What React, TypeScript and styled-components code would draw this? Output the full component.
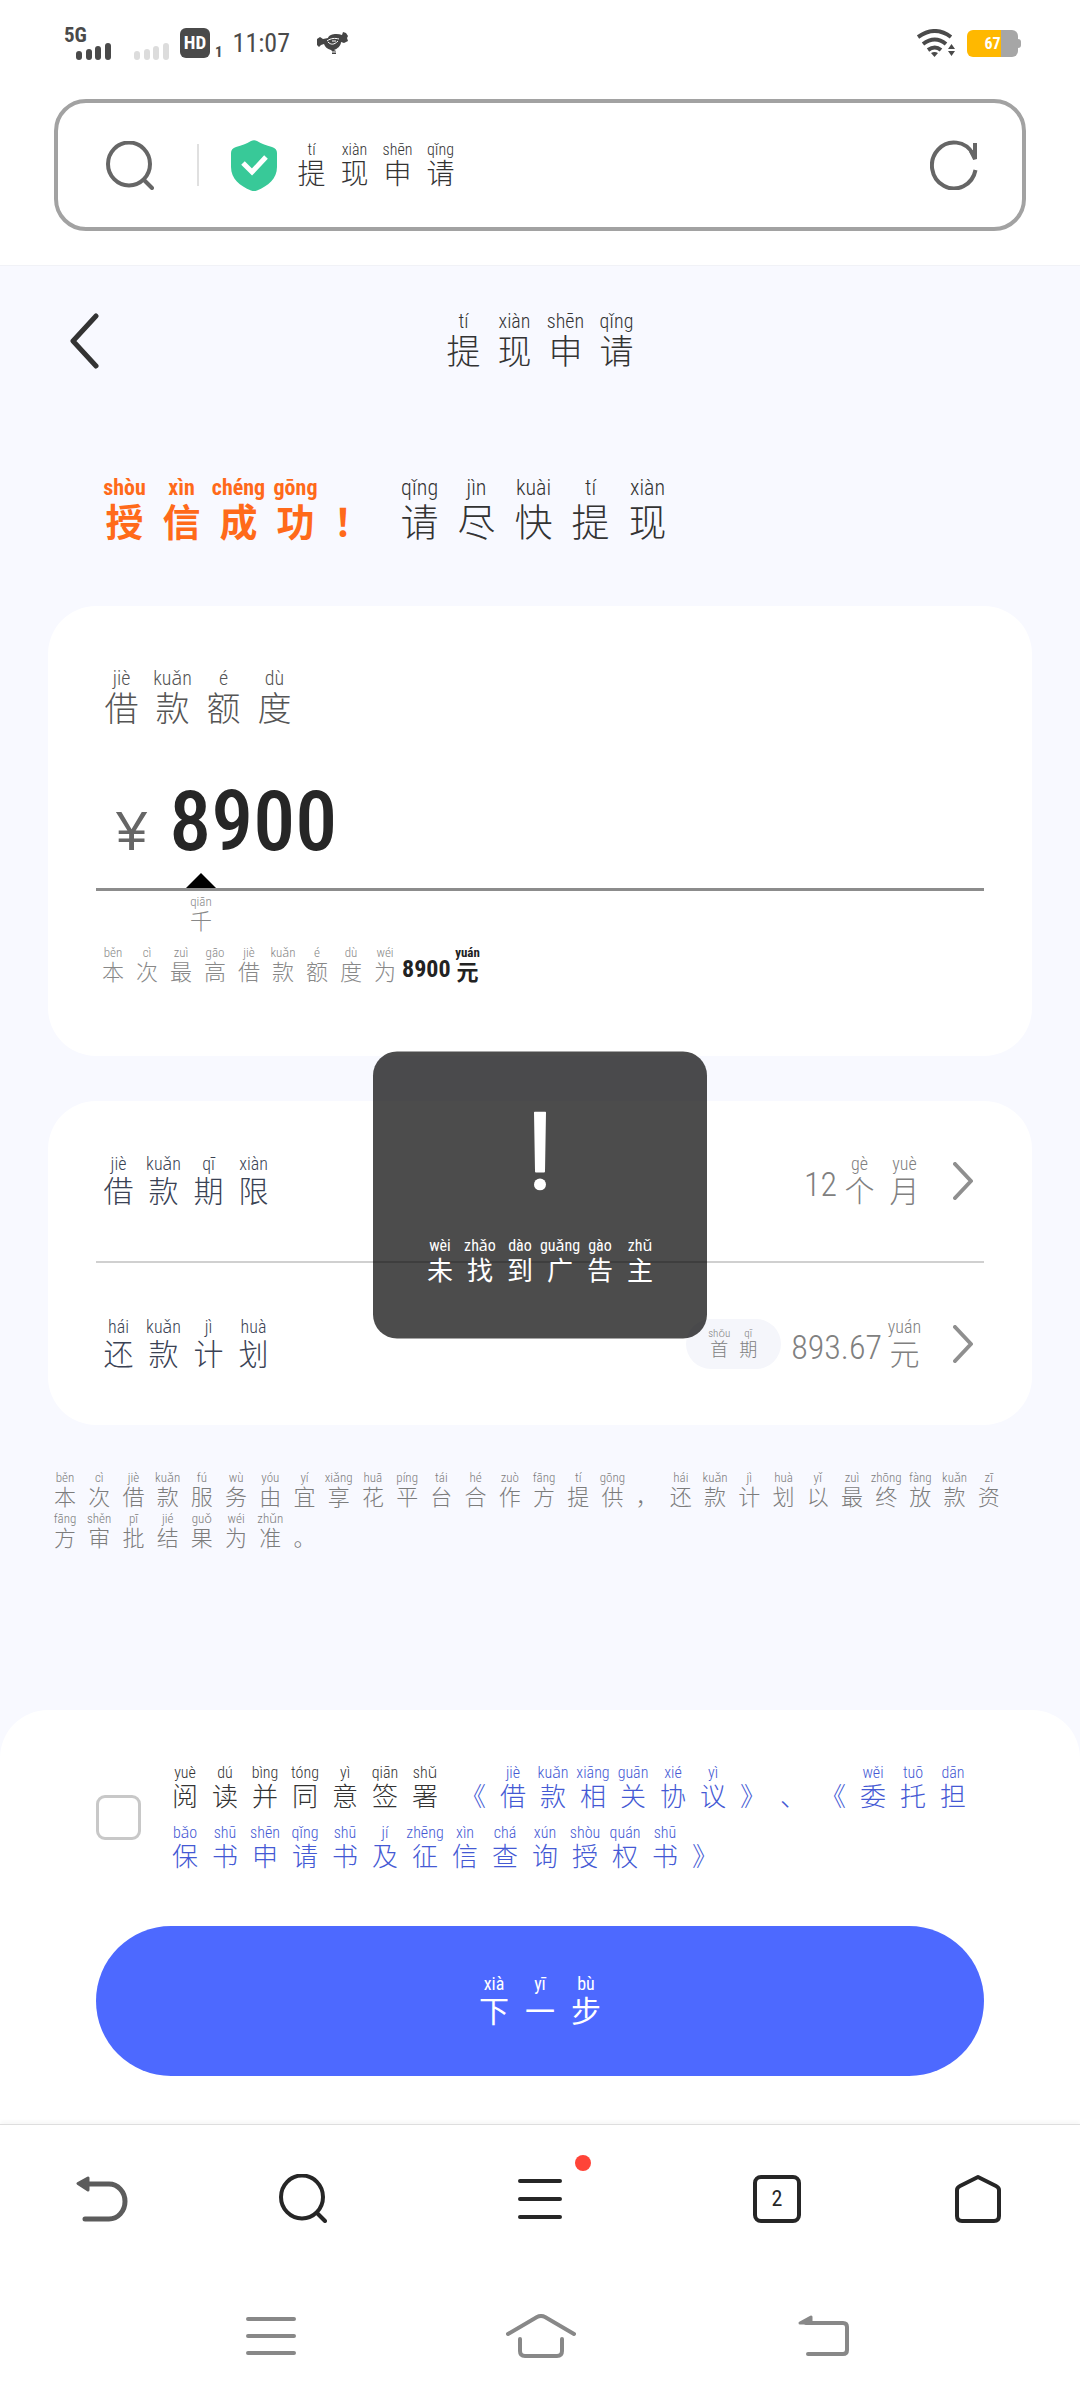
import React, { useState } from "react";
import styled, { createGlobalStyle, css } from "styled-components";

const latin = `"Roboto Condensed", Roboto, "Noto Sans", sans-serif`;
const han = `"Liberation Sans", "Noto Sans CJK SC", sans-serif`;

const GlobalStyle = createGlobalStyle`
  * { box-sizing: border-box; }
  body { margin: 0; background: #fff; font-family: ${han}; color: #333; }
  button { border: 0; padding: 0; background: none; font: inherit; color: inherit; cursor: pointer; }
  h1, h2, p { margin: 0; font-weight: 300; }
  svg { display: block; flex: none; }
`;

/* ---------- annotated text ---------- */

const scales = {
  address: { size: 28, height: 32, cell: 43, rt: 16, line: 19 },
  title: { size: 34, height: 39, cell: 51, rt: 20, line: 23 },
  headline: { size: 38, height: 44, cell: 57, rt: 22, line: 26 },
  label: { size: 34, height: 39, cell: 51, rt: 20, line: 23 },
  row: { size: 30, height: 35, cell: 45, rt: 18, line: 21 },
  toast: { size: 26, height: 30, cell: 40, rt: 16, line: 20 },
  agree: { size: 26, height: 30, cell: 40, rt: 16, line: 19 },
  next: { size: 30, height: 35, cell: 46, rt: 18, line: 21 },
  note: { size: 22, height: 25, cell: 34, rt: 13, line: 15 },
  pill: { size: 18, height: 21, cell: 29, rt: 11, line: 13 },
};
type Scale = keyof typeof scales;

const Cell = styled.ruby<{ $scale: Scale; $leading?: boolean }>`
  display: inline-flex;
  flex-direction: column-reverse;
  align-items: center;
  vertical-align: top;
  flex: none;
  width: ${(p) => scales[p.$scale].cell}px;
  font-size: ${(p) => scales[p.$scale].size}px;
  line-height: ${(p) => scales[p.$scale].height}px;
  white-space: nowrap;
  ${(p) => p.$leading && css`padding: 6px 0 5px;`}

  rt {
    display: block;
    height: ${(p) => scales[p.$scale].line}px;
    font-family: ${latin};
    font-size: ${(p) => scales[p.$scale].rt}px;
    line-height: ${(p) => scales[p.$scale].line}px;
  }
`;

/* Each token is one character followed by its reading, e.g. "提tí". */
function Pinyin({ text, scale, leading }: { text: string; scale: Scale; leading?: boolean }) {
  return (
    <>
      {text.split(" ").map((token, i) => (
        <Cell key={i} $scale={scale} $leading={leading}>
          {token[0]}
          <rt>{token.slice(1)}</rt>
        </Cell>
      ))}
    </>
  );
}

const Line = styled.span`
  display: flex;
  align-items: flex-end;
`;

const Digits = styled.span<{ $small?: boolean }>`
  font-family: ${latin};
  font-size: ${(p) => (p.$small ? 24 : 34)}px;
  line-height: ${(p) => (p.$small ? 32 : 50)}px;
`;

/* ---------- status bar ---------- */

const StatusBar = styled.header`
  display: flex;
  justify-content: space-between;
  align-items: center;
  height: 86px;
  padding: 0 59px 0 64px;
  color: #4a4a4a;
`;

const StatusGroup = styled.div<{ $gap: number }>`
  display: flex;
  align-items: center;
  gap: ${(p) => p.$gap}px;
`;

const Clock = styled.time`
  font-family: ${latin};
  font-size: 26px;
  line-height: 30px;
  margin-right: 17px;
`;

const Battery = styled.div`
  display: flex;
  align-items: center;
`;

const BatteryCell = styled.div`
  display: flex;
  align-items: center;
  justify-content: center;
  width: 51px;
  height: 27px;
  border-radius: 6px;
  background: linear-gradient(to right, #ffb800 67%, #a6a6a6 67%);
  color: #fff;
  font: bold 16px/27px ${latin};
`;

const BatteryTip = styled.div`
  width: 3px;
  height: 9px;
  border-radius: 0 3px 3px 0;
  background: #a6a6a6;
`;

/* ---------- address bar ---------- */

const AddressBar = styled.div`
  display: flex;
  align-items: center;
  height: 132px;
  margin: 13px 54px 34px;
  padding: 0 44px 0 48px;
  border: 4px solid #a2a2a2;
  border-radius: 32px;
`;

const Separator = styled.div`
  width: 2px;
  height: 42px;
  margin: 0 32px 0 43px;
  background: #e0e0e0;
`;

const Address = styled.div`
  flex: 1;
  padding-left: 13px;
  font-weight: 300;
  color: #333;
`;

/* ---------- web page ---------- */

const Page = styled.main`
  position: relative;
  background: #f8f9ff;
  border-top: 1px solid #f1f2f7;
`;

const TitleBar = styled.div`
  display: grid;
  grid-template-columns: 1fr auto 1fr;
  align-items: center;
  padding: 44px 68px 0;
`;

const Title = styled.h1`
  display: flex;
  color: #333;
`;

const Headline = styled.h2`
  display: flex;
  gap: 10px;
  padding: 103px 96px 61px;
`;

const Success = styled.strong`
  display: flex;
  font-weight: 700;
  color: #ff6a1a;
`;

const Card = styled.section<{ $pad?: string }>`
  margin: 0 48px 45px;
  padding: ${(p) => p.$pad ?? "0 48px"};
  border-radius: 48px;
  background: #fff;
`;

const AmountLabel = styled.label`
  display: flex;
  font-weight: 300;
  color: #555;
`;

const AmountRow = styled.div`
  display: flex;
  align-items: baseline;
  gap: 22px;
  padding: 48px 0 6px 20px;
`;

const Currency = styled.span`
  font-family: "Liberation Sans", sans-serif;
  font-size: 56px;
  line-height: 60px;
  color: #666;
`;

const AmountInput = styled.input`
  flex: 1;
  min-width: 0;
  height: 90px;
  padding: 0;
  border: 0;
  outline: 0;
  background: none;
  color: #262626;
  font: 500 84px/90px ${latin};
`;

const Ruler = styled.div`
  padding-left: 90px;
  border-bottom: 3px solid #8c8c8c;
`;

const Pointer = styled.div`
  width: 30px;
  height: 15px;
  background: #000;
  clip-path: polygon(50% 0, 100% 100%, 0 100%);
`;

const Unit = styled.div`
  display: flex;
  padding: 3px 0 11px 88px;
  font-weight: 300;
  color: #888;
`;

const Limit = styled.p`
  display: flex;
  align-items: flex-end;
  color: #888;

  strong {
    display: flex;
    align-items: flex-end;
    color: #222;
    font-weight: 700;
  }
`;

const Row = styled.button`
  display: flex;
  align-items: center;
  justify-content: space-between;
  width: 100%;
  height: 160px;
  padding-right: 11px;
  color: #3a4254;
  font-weight: 300;

  & + & {
    height: 164px;
    border-top: 2px solid #d0d0d0;
  }
`;

const Value = styled.span`
  display: flex;
  align-items: center;
  gap: 26px;
  color: #808080;
`;

const Pill = styled.span`
  display: flex;
  justify-content: center;
  align-items: center;
  width: 95px;
  height: 50px;
  margin-right: 10px;
  border-radius: 25px;
  background: #f5f6fb;
`;

const ValueText = styled.span`
  display: flex;
  align-items: center;
`;

const Disclaimer = styled.p`
  display: grid;
  grid-template-columns: repeat(auto-fill, minmax(34px, 1fr));
  row-gap: 1px;
  padding: 0 74px 159px 48px;
  color: #7c7c7c;
`;

const Sheet = styled.form`
  padding: 47px 96px 48px;
  border-radius: 48px 48px 0 0;
  background: #fff;
`;

const Agreement = styled.div`
  display: flex;
  align-items: center;
  gap: 24px;
`;

const CheckBox = styled.input`
  appearance: none;
  flex: none;
  width: 45px;
  height: 45px;
  margin: 0;
  border: 3px solid #c8c8c8;
  border-radius: 9px;
  background: #fff;

  &:checked {
    border-color: #4d69ff;
    background: #4d69ff;
  }
`;

const AgreementText = styled.label`
  flex: 1;
  line-height: 0;
  font-weight: 300;
  color: #333;

  a {
    margin-left: 8px;
    color: #4459d4;
    text-decoration: none;
  }

  a + a {
    margin-left: 0;
  }
`;

const NextButton = styled.button`
  display: flex;
  align-items: center;
  justify-content: center;
  width: 100%;
  height: 150px;
  margin-top: 49px;
  border-radius: 75px;
  background: #4d69ff;
  color: #fff;
`;

const Toast = styled.div`
  position: absolute;
  top: 50%;
  left: 50%;
  transform: translate(-50%, -50%);
  display: flex;
  flex-direction: column;
  align-items: center;
  gap: 45px;
  padding: 60px 47px 53px;
  border-radius: 24px;
  background: rgba(0, 0, 0, 0.7);
  color: #fff;
`;

/* ---------- bottom bars ---------- */

const BrowserBar = styled.nav`
  display: grid;
  grid-template-columns: 204fr 198fr 276fr 198fr 204fr;
  height: 148px;
  border-top: 1px solid #dedede;
  box-shadow: 0 -3px 4px rgba(0, 0, 0, 0.03);
  position: relative;
  background: #fff;
`;

const SystemBar = styled.nav`
  display: grid;
  grid-template-columns: 282fr 258fr 308fr;
  height: 128px;
  padding: 0 102px 0 130px;
`;

const BarButton = styled.button`
  display: flex;
  align-items: center;
  justify-content: center;
`;

const Badged = styled.span`
  display: flex;
  position: relative;
`;

const Dot = styled.span`
  position: absolute;
  top: -24px;
  right: -29px;
  width: 16px;
  height: 16px;
  border-radius: 50%;
  background: #ff4438;
`;

const TabCount = styled.span`
  display: flex;
  align-items: center;
  justify-content: center;
  width: 48px;
  height: 48px;
  border: 4px solid #262626;
  border-radius: 8px;
  font: 22px/24px ${latin};
  color: #262626;
`;

/* ---------- drawings ---------- */

const Signal = ({ color }: { color: string }) => (
  <svg width="36" height="17" viewBox="0 0 36 17" fill={color}>
    <rect x="0" y="8" width="6" height="9" rx="3" />
    <rect x="10" y="6" width="6" height="11" rx="3" />
    <rect x="19" y="3" width="6" height="14" rx="3" />
    <rect x="29" y="0" width="6" height="17" rx="3" />
  </svg>
);

const Network = styled.div`
  display: grid;
  justify-items: start;
  font: bold 21px/16px ${latin};

  svg {
    margin-left: 12px;
  }
`;

const IdleSim = styled.div`
  padding: 16px 0 0 12px;
`;

const Hd = styled.div`
  display: flex;
  align-items: center;
  justify-content: center;
  width: 30px;
  height: 30px;
  border-radius: 6px;
  background: #4a4a4a;
  color: #fff;
  font: bold 19px/30px ${latin};
`;

const SimIndex = styled.span`
  margin: 18px 0 0 -5px;
  font: bold 15px/12px ${latin};
`;

const Bird = () => (
  <svg width="31" height="22" viewBox="0 0 31 22">
    <path
      fill="#454545"
      d="M0 7 3 5l3 2 5-1c1-4 9-5 14-3l1-3 3 1 2 3-1 2 1 3-4 2-3-1c0 4-4 7-7 8l2 1v3h-4v-3l-1-1c-4-1-6-3-7-6l-3 1-2 2-2-2z"
    />
    <path fill="none" stroke="#fff" strokeWidth="1" d="M10 9c4-3 8-3 12-2M11 10c3 3 6 3 10-1M15 9h4M14 20h6" />
  </svg>
);

const Wifi = () => (
  <svg width="38" height="28" viewBox="0 0 38 28">
    <g fill="none" stroke="#4a4a4a" strokeWidth="4">
      <path d="M1 8q17-12 33 0" />
      <path d="M6 15q12-9 23 0" />
      <path d="M11 21q7-5 13 0" />
    </g>
    <path fill="#4a4a4a" d="M14 24q3.500-2 7 0l-3.500 4zM31 20l3.500-5 3.500 5zM31 22h7l-3.500 5z" />
  </svg>
);

const Magnifier = ({ color }: { color: string }) => (
  <svg width="48" height="49" viewBox="0 0 48 49" fill="none" stroke={color} strokeWidth="4">
    <ellipse cx="23" cy="23" rx="21" ry="21.500" />
    <path d="M38 39l8 8" strokeLinecap="round" />
  </svg>
);

const Shield = () => (
  <svg width="46" height="51" viewBox="0 0 46 51">
    <path
      fill="#38c998"
      d="M20 1q3-1.500 6 0c5 3 9 4 15 6q5 1.500 5 6v14c0 12-9 19-20 23.500q-3 1-6 0C9 46 0 39 0 27V13q0-4.500 5-6c6-2 10-3 15-6z"
    />
    <path d="M12 23l9 9 14-15" fill="none" stroke="#fff" strokeWidth="5" />
  </svg>
);

const Reload = () => (
  <svg width="48" height="50" viewBox="0 0 48 50" fill="none" stroke="#666" strokeWidth="4">
    <path d="M45.500 30A22 23 0 1 1 43 14" />
    <path d="M45 3v16l-4-8" />
  </svg>
);

const Chevron = ({ back }: { back?: boolean }) =>
  back ? (
    <svg width="32" height="56" viewBox="0 0 32 56" fill="none">
      <path d="M28 3 5 28l23 25" stroke="#333" strokeWidth="5" strokeLinecap="round" strokeLinejoin="round" />
    </svg>
  ) : (
    <svg width="20" height="38" viewBox="0 0 20 38" fill="none">
      <path d="M2 2l16 17L2 36" stroke="#8f8f8f" strokeWidth="4" strokeLinecap="round" strokeLinejoin="round" />
    </svg>
  );

const Exclamation = () => (
  <svg width="12" height="79" viewBox="0 0 12 79" fill="#fff">
    <path d="M1 0h10q1 0 1 1l-1 59q0 1-1 1H2q-1 0-1-1L0 1q0-1 1-1z" />
    <circle cx="6" cy="73" r="6" />
  </svg>
);

const Undo = () => (
  <svg width="52" height="46" viewBox="0 0 52 46" fill="none" stroke="#5c5c5c" strokeWidth="5" strokeLinecap="round">
    <path d="M12 8h21a16 17.500 0 0 1 0 35H9" />
    <path d="M2 7.500 12 2v12z" fill="#5c5c5c" strokeWidth="3" strokeLinejoin="round" />
  </svg>
);

const Bars = ({ width, gap, color }: { width: number; gap: number; color: string }) => (
  <svg width={width} height={gap * 2 + 4} fill="none" stroke={color} strokeWidth="4" strokeLinecap="round">
    <path d={`M2 2H${width - 2}M2 ${2 + gap}H${width - 2}M2 ${2 + gap * 2}H${width - 2}`} />
  </svg>
);

const House = () => (
  <svg width="46" height="50" viewBox="0 0 46 50" fill="none" stroke="#262626" strokeWidth="4" strokeLinejoin="round">
    <path d="M23 3 5 12q-3 1.500-3 4v26q0 5 5 5h32q5 0 5-5V16q0-2.500-3-4z" />
  </svg>
);

const SystemHome = () => (
  <svg width="70" height="44" viewBox="0 0 70 44" fill="none" stroke="#888" strokeWidth="4" strokeLinecap="round">
    <path d="M2 20 31 3q4-2 8 0l29 17" />
    <path d="M14 25v12q0 5 5 5h32q5 0 5-5V25" />
  </svg>
);

const SystemBack = () => (
  <svg width="52" height="42" viewBox="0 0 52 42" fill="none" stroke="#888" strokeWidth="4" strokeLinecap="round">
    <path d="M8 8h37q4 0 4 4v23q0 4-4 4H10" />
    <path d="M2 8l11-6v6z" fill="#888" strokeWidth="3" strokeLinejoin="round" />
  </svg>
);

/* ---------- screen ---------- */

export default function App() {
  const [amount, setAmount] = useState("8900");
  const [agreed, setAgreed] = useState(false);

  return (
    <>
      <GlobalStyle />
      <StatusBar>
        <StatusGroup $gap={10}>
          <Network>
            5G
            <Signal color="#4a4a4a" />
          </Network>
          <IdleSim>
            <Signal color="#dcdcdc" />
          </IdleSim>
          <Hd>HD</Hd>
          <SimIndex>1</SimIndex>
          <Clock>11:07</Clock>
          <Bird />
        </StatusGroup>
        <StatusGroup $gap={12}>
          <Wifi />
          <Battery>
            <BatteryCell>67</BatteryCell>
            <BatteryTip />
          </Battery>
        </StatusGroup>
      </StatusBar>

      <AddressBar>
        <Magnifier color="#666" />
        <Separator />
        <Shield />
        <Address>
          <Line>
            <Pinyin scale="address" text="提tí 现xiàn 申shēn 请qǐng" />
          </Line>
        </Address>
        <button type="button" aria-label="刷新">
          <Reload />
        </button>
      </AddressBar>

      <Page>
        <TitleBar>
          <button type="button" aria-label="返回">
            <Chevron back />
          </button>
          <Title>
            <Pinyin scale="title" text="提tí 现xiàn 申shēn 请qǐng" />
          </Title>
        </TitleBar>

        <Headline>
          <Success>
            <Pinyin scale="headline" text="授shòu 信xìn 成chéng 功gōng ！" />
          </Success>
          <Line>
            <Pinyin scale="headline" text="请qǐng 尽jìn 快kuài 提tí 现xiàn" />
          </Line>
        </Headline>

        <Card $pad="61px 48px 71px">
          <AmountLabel htmlFor="amount">
            <Pinyin scale="label" text="借jiè 款kuǎn 额é 度dù" />
          </AmountLabel>
          <AmountRow>
            <Currency>¥</Currency>
            <AmountInput id="amount" inputMode="numeric" value={amount} onChange={(e) => setAmount(e.target.value)} />
          </AmountRow>
          <Ruler>
            <Pointer />
          </Ruler>
          <Unit>
            <Pinyin scale="note" text="千qiān" />
          </Unit>
          <Limit>
            <Pinyin scale="note" text="本běn 次cì 最zuì 高gāo 借jiè 款kuǎn 额é 度dù 为wéi" />
            <strong>
              <Digits $small>8900</Digits>
              <Pinyin scale="note" text="元yuán" />
            </strong>
          </Limit>
        </Card>

        <Card>
          <Row type="button">
            <Line>
              <Pinyin scale="row" text="借jiè 款kuǎn 期qī 限xiàn" />
            </Line>
            <Value>
              <Line>
                <Digits>12</Digits>
                <Pinyin scale="row" text="个gè 月yuè" />
              </Line>
              <Chevron />
            </Value>
          </Row>
          <Row type="button">
            <Line>
              <Pinyin scale="row" text="还hái 款kuǎn 计jì 划huà" />
            </Line>
            <Value>
              <ValueText>
                <Pill>
                  <Pinyin scale="pill" text="首shǒu 期qī" />
                </Pill>
                <Line>
                  <Digits>893.67</Digits>
                  <Pinyin scale="row" text="元yuán" />
                </Line>
              </ValueText>
              <Chevron />
            </Value>
          </Row>
        </Card>

        <Disclaimer>
          <Pinyin
            scale="note"
            text="本běn 次cì 借jiè 款kuǎn 服fú 务wù 由yóu 宜yí 享xiǎng 花huā 平píng 台tái 合hé 作zuò 方fāng 提tí 供gōng ， 还hái 款kuǎn 计jì 划huà 以yǐ 最zuì 终zhōng 放fàng 款kuǎn 资zī 方fāng 审shěn 批pī 结jié 果guǒ 为wéi 准zhǔn 。"
          />
        </Disclaimer>

        <Sheet onSubmit={(e) => e.preventDefault()}>
          <Agreement>
            <CheckBox id="agree" type="checkbox" checked={agreed} onChange={(e) => setAgreed(e.target.checked)} />
            <AgreementText htmlFor="agree">
              <Pinyin leading scale="agree" text="阅yuè 读dú 并bìng 同tóng 意yì 签qiān 署shǔ" />
              <a href="#loan">
                <Pinyin leading scale="agree" text="《 借jiè 款kuǎn 相xiāng 关guān 协xié 议yì 》 、" />
              </a>
              <a href="#guarantee">
                <Pinyin
                  leading
                  scale="agree"
                  text="《 委wěi 托tuō 担dān 保bǎo 书shū 申shēn 请qǐng 书shū 及jí 征zhēng 信xìn 查chá 询xún 授shòu 权quán 书shū 》"
                />
              </a>
            </AgreementText>
          </Agreement>
          <NextButton type="submit">
            <Pinyin scale="next" text="下xià 一yī 步bù" />
          </NextButton>
        </Sheet>

        <Toast role="alert">
          <Exclamation />
          <Line>
            <Pinyin scale="toast" text="未wèi 找zhǎo 到dào 广guǎng 告gào 主zhǔ" />
          </Line>
        </Toast>
      </Page>

      <BrowserBar>
        <BarButton type="button" aria-label="后退">
          <Undo />
        </BarButton>
        <BarButton type="button" aria-label="搜索">
          <Magnifier color="#262626" />
        </BarButton>
        <BarButton type="button" aria-label="菜单">
          <Badged>
            <Bars width={44} gap={18} color="#262626" />
            <Dot />
          </Badged>
        </BarButton>
        <BarButton type="button" aria-label="标签页">
          <TabCount>2</TabCount>
        </BarButton>
        <BarButton type="button" aria-label="主页">
          <House />
        </BarButton>
      </BrowserBar>

      <SystemBar>
        <BarButton type="button" aria-label="最近任务">
          <Bars width={50} gap={17} color="#888" />
        </BarButton>
        <BarButton type="button" aria-label="桌面">
          <SystemHome />
        </BarButton>
        <BarButton type="button" aria-label="返回上一级">
          <SystemBack />
        </BarButton>
      </SystemBar>
    </>
  );
}
